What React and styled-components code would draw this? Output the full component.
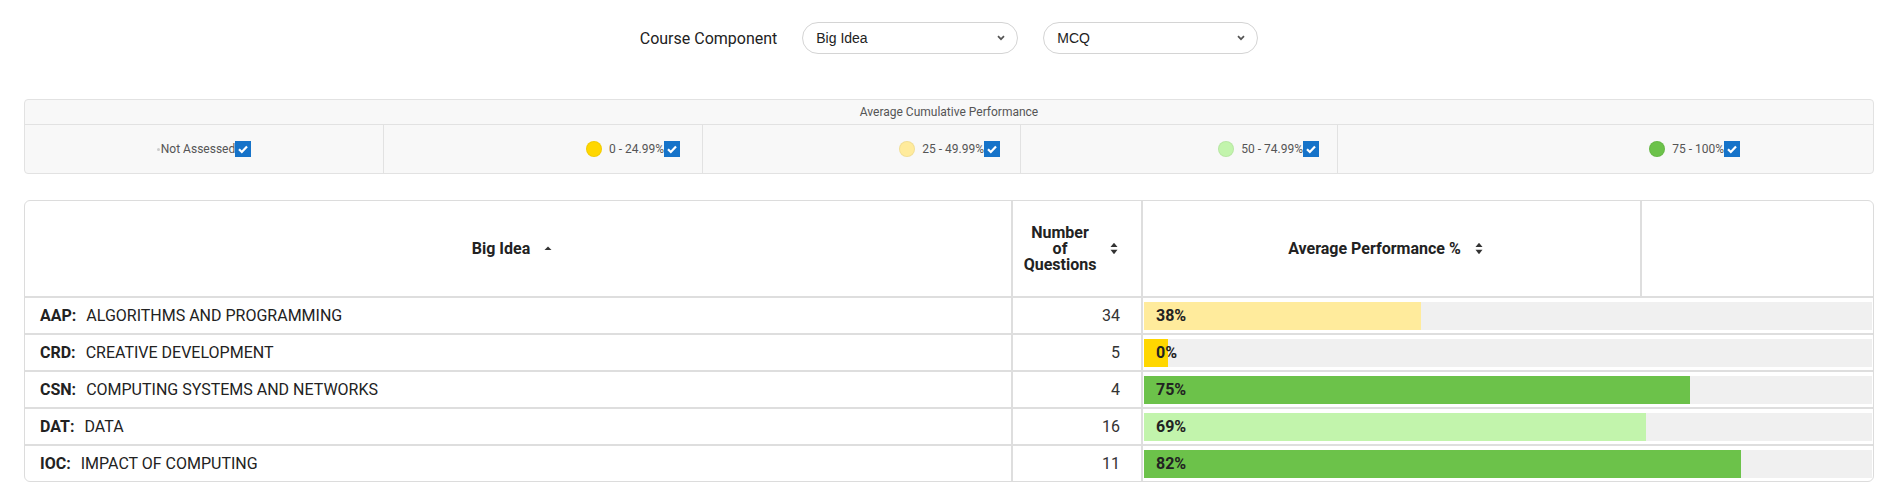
import React from 'react';
import styled, { createGlobalStyle } from 'styled-components';

const GlobalStyle = createGlobalStyle`
  * { box-sizing: border-box; }
  html, body { margin: 0; padding: 0; background: #fff; }
  body {
    font-family: Roboto, "Liberation Sans", Arial, sans-serif;
    color: #222;
  }
`;

const Page = styled.div`
  padding: 22px 16px 10px 24px;
`;

const FilterBar = styled.div`
  display: flex;
  justify-content: center;
  align-items: center;
  gap: 25px;
  margin-bottom: 45px;
`;

const FilterLabel = styled.span`
  font-size: 16px;
  color: #222;
`;

const SelectBox = styled.div`
  width: ${(p) => p.$width}px;
  height: 32px;
  border: 1px solid #d4d4d4;
  border-radius: 16px;
  display: flex;
  align-items: center;
  justify-content: space-between;
  padding: 0 12px 0 13px;
  font-family: "Liberation Sans", Arial, sans-serif;
  font-size: 14px;
  color: #222;
  background: #fff;
`;

const Legend = styled.div`
  border: 1px solid #e2e2e2;
  border-radius: 4px;
  background: #f8f8f8;
  margin-bottom: 26px;
`;

const LegendTitle = styled.div`
  height: 25px;
  border-bottom: 1px solid #e2e2e2;
  display: flex;
  align-items: center;
  justify-content: center;
  font-size: 12px;
  color: #555;
`;

const LegendRow = styled.div`
  display: grid;
  grid-template-columns: 359px 319px 318px 317px 1fr;
  height: 48px;
`;

const LegendCell = styled.div`
  display: flex;
  align-items: center;
  justify-content: ${(p) => (p.$center ? 'center' : 'flex-end')};
  padding-right: ${(p) => p.$pad || 0}px;
  border-right: 1px solid #e2e2e2;
  font-size: 12px;
  color: #555;

  &:last-child {
    border-right: none;
  }
`;

const Dot = styled.span`
  width: 16px;
  height: 16px;
  border-radius: 50%;
  background: ${(p) => p.$color};
  border: 1px solid rgba(0, 0, 0, 0.05);
  margin-right: 7px;
`;

const TinyDot = styled.span`
  width: 3px;
  height: 3px;
  border-radius: 50%;
  background: #ccc;
  margin-right: 1px;
`;

const CheckBox = styled.span`
  width: 16px;
  height: 16px;
  background: #1673c9;
  display: inline-flex;
  align-items: center;
  justify-content: center;
`;

const TableWrap = styled.div`
  border: 1px solid #dcdcdc;
  border-radius: 6px;
  overflow: hidden;
`;

const Row = styled.div`
  display: grid;
  grid-template-columns: 988px 130px 499px 1fr;
  border-bottom: 2px solid #dedede;

  &:last-child {
    border-bottom: none;
  }
`;

const HeadCell = styled.div`
  height: 95px;
  display: flex;
  align-items: center;
  justify-content: center;
  gap: 14px;
  padding-right: 12px;
  font-weight: 700;
  font-size: 16px;
  line-height: 16px;
  color: #222;
  text-align: center;
  border-right: 2px solid #dedede;

  &:last-child {
    border-right: none;
  }
`;

const NameCell = styled.div`
  height: 35px;
  display: flex;
  align-items: center;
  padding-left: 15px;
  font-size: 16px;
  color: #222;
  border-right: 2px solid #dedede;
`;

const Code = styled.b`
  font-weight: 700;
  margin-right: 10px;
`;

const CountCell = styled(NameCell)`
  justify-content: flex-end;
  padding: 0 21px 0 0;
  color: #333;
`;

const BarCell = styled.div`
  grid-column: span 2;
  display: flex;
  align-items: center;
  padding: 0 1px;
`;

const Track = styled.div`
  flex: 1;
  height: 28px;
  background: #f0f0f0;
  display: flex;
`;

const Fill = styled.div`
  height: 100%;
  min-width: 24px;
  background: ${(p) => p.$color};
  padding-left: 12px;
  display: flex;
  align-items: center;
  font-weight: 700;
  font-size: 16px;
  color: #222;
  white-space: nowrap;
`;

const bands = [
  { label: '0 - 24.99%', color: '#ffd700', pad: 22 },
  { label: '25 - 49.99%', color: '#ffeb9c', pad: 20 },
  { label: '50 - 74.99%', color: '#c2f4ac', pad: 18 },
  { label: '75 - 100%', color: '#6cc24a', pad: 133 },
];

const ideas = [
  { code: 'AAP:', name: 'ALGORITHMS AND PROGRAMMING', count: 34, pct: 38 },
  { code: 'CRD:', name: 'CREATIVE DEVELOPMENT', count: 5, pct: 0 },
  { code: 'CSN:', name: 'COMPUTING SYSTEMS AND NETWORKS', count: 4, pct: 75 },
  { code: 'DAT:', name: 'DATA', count: 16, pct: 69 },
  { code: 'IOC:', name: 'IMPACT OF COMPUTING', count: 11, pct: 82 },
];

const bandColor = (pct) => {
  if (pct < 25) return '#ffd700';
  if (pct < 50) return '#ffeb9c';
  if (pct < 75) return '#c2f4ac';
  return '#6cc24a';
};

const Chevron = () => (
  <svg width="8" height="6" viewBox="0 0 8 6">
    <path d="M1 1.2 L4 4.2 L7 1.2" fill="none" stroke="#555" strokeWidth="1.7" />
  </svg>
);

const Tick = () => (
  <svg width="12" height="12" viewBox="0 0 12 12">
    <path d="M2 6.3 L4.8 9 L10 3.4" fill="none" stroke="#fff" strokeWidth="2.2" />
  </svg>
);

const SortIcon = ({ dir }) => (
  <svg width="8" height="13" viewBox="0 0 8 13">
    {dir === 'asc' && <path d="M0.5 8 L4 4.5 L7.5 8 Z" fill="#333" />}
    {!dir && <path d="M0.5 5 L4 0.8 L7.5 5 Z" fill="#333" />}
    {!dir && <path d="M0.5 7.8 L4 12.2 L7.5 7.8 Z" fill="#333" />}
  </svg>
);

export default function App() {
  return (
    <Page>
      <GlobalStyle />
      <FilterBar>
        <FilterLabel>Course Component</FilterLabel>
        <SelectBox $width={216}>
          Big Idea
          <Chevron />
        </SelectBox>
        <SelectBox $width={215}>
          MCQ
          <Chevron />
        </SelectBox>
      </FilterBar>

      <Legend>
        <LegendTitle>Average Cumulative Performance</LegendTitle>
        <LegendRow>
          <LegendCell $center>
            <TinyDot />
            Not Assessed
            <CheckBox><Tick /></CheckBox>
          </LegendCell>
          {bands.map((b) => (
            <LegendCell key={b.label} $pad={b.pad}>
              <Dot $color={b.color} />
              {b.label}
              <CheckBox><Tick /></CheckBox>
            </LegendCell>
          ))}
        </LegendRow>
      </Legend>

      <TableWrap>
        <Row>
          <HeadCell>
            Big Idea
            <SortIcon dir="asc" />
          </HeadCell>
          <HeadCell>
            <span>Number<br />of<br />Questions</span>
            <SortIcon />
          </HeadCell>
          <HeadCell>
            Average Performance %
            <SortIcon />
          </HeadCell>
          <HeadCell />
        </Row>
        {ideas.map((row) => (
          <Row key={row.code}>
            <NameCell>
              <Code>{row.code}</Code>
              {row.name}
            </NameCell>
            <CountCell>{row.count}</CountCell>
            <BarCell>
              <Track>
                <Fill $color={bandColor(row.pct)} style={{ width: `${row.pct}%` }}>
                  {row.pct}%
                </Fill>
              </Track>
            </BarCell>
          </Row>
        ))}
      </TableWrap>
    </Page>
  );
}
